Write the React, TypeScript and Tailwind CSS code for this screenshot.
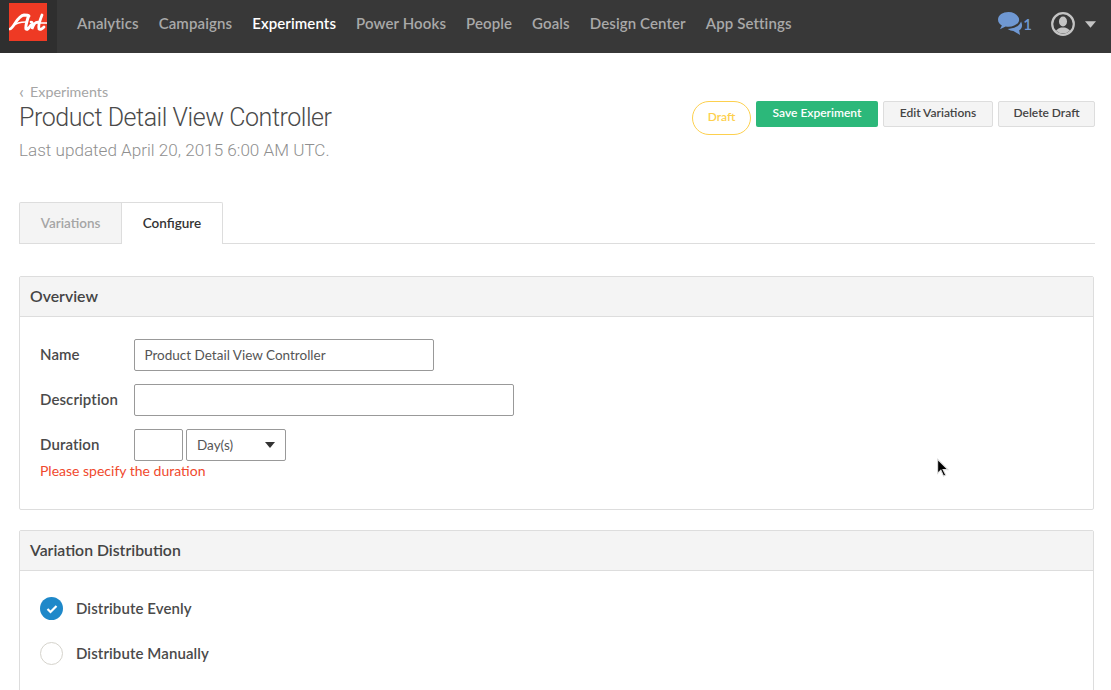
import React from 'react';

const font = { fontFamily: 'Lato, "Open Sans", sans-serif' };
const titleFont = { fontFamily: 'Roboto, sans-serif' };

const navItems = [
  { label: 'Analytics', active: false },
  { label: 'Campaigns', active: false },
  { label: 'Experiments', active: true },
  { label: 'Power Hooks', active: false },
  { label: 'People', active: false },
  { label: 'Goals', active: false },
  { label: 'Design Center', active: false },
  { label: 'App Settings', active: false },
];

const Caret = ({ className }: { className: string }) => (
  <svg viewBox="0 0 12 7" className={className}>
    <path d="M0 0h12L6 7z" fill="currentColor" />
  </svg>
);

const Panel = ({ title, children, className }: { title: string; children: React.ReactNode; className: string }) => (
  <section className={`border border-[#dddddd] rounded-[2px] ${className}`}>
    <h2 className="h-[40px] flex items-center pb-[2px] px-[10px] bg-[#f4f4f4] border-b border-[#dddddd] text-[15.800px] font-semibold text-[#444444]">{title}</h2>
    {children}
  </section>
);

const Row = ({ label, children }: { label: string; children: React.ReactNode }) => (
  <div className="flex items-center h-[32px]">
    <label className="w-[94px] pb-[2px] text-[15px] tracking-[0.1px] font-semibold text-[#4a4a4a]">{label}</label>
    {children}
  </div>
);

export default function App() {
  return (
    <div className="relative w-[1111px] h-[690px] overflow-hidden bg-white" style={font}>
      <nav className="h-[53px] bg-[#383838] flex items-center">
        <div className="w-[57px] h-full bg-[#2f2f2f] flex items-center pl-[9px] shrink-0 pb-[10px]">
          <div className="w-[38px] h-[38px] bg-[#ee3a24] overflow-hidden">
            <svg viewBox="0 0 38 38" className="w-[38px] h-[38px]">
              <g fill="none" stroke="white" strokeLinecap="round">
                <path d="M1 26C5 25 8 13 15 12c2 0 4 0 5 1" strokeWidth="2.800" />
                <path d="M4 23c3-3 8-4 13-4" strokeWidth="1.400" />
                <path d="M19.500 13c-1.500 5-3.500 11-2.500 13 1 1 3-1 5-4" strokeWidth="3" />
                <path d="M22 19c1.500 0 2 1 1 7 2-5 3-7 6-7" strokeWidth="2.600" />
                <path d="M33 12c-2 5-4 11-3 14 1 1 3 0 5-2" strokeWidth="2.800" />
                <path d="M27 20h11" strokeWidth="1.600" />
              </g>
            </svg>
          </div>
        </div>
        <div className="flex gap-[20px] ml-[20px] pb-[6px]">
          {navItems.map((item) => (
            <a key={item.label} className={`text-[15px] tracking-[0.11px] font-semibold ${item.active ? 'text-white' : 'text-[#a9a9a9]'}`}>{item.label}</a>
          ))}
        </div>
        <div className="ml-auto flex items-center mr-[15px] pb-[5px]">
          <svg viewBox="0 0 26 25" className="w-[25px] h-[24px] text-[#6f98d3]">
            <path d="M11 0C5 0 0 3 0 8c0 3 2 5 4 6l-2 4 6-3c1 0 2 .4 3 .4 6 0 11-3.400 11-7.400S17 0 11 0z" fill="currentColor" />
            <path d="M24 10c-1 4-6 7-12 7.500l-2 .2c2 1.300 4 2 6 2l7 4.300-1-5c2-1 3-3 3-5 0-1.500-.4-2.500-1-4z" fill="currentColor" />
          </svg>
          <span className="text-[15px] font-semibold text-[#6f98d3]">1</span>
          <svg viewBox="0 0 24 24" className="ml-[19px] w-[24px] h-[24px]">
            <defs>
              <clipPath id="avatar">
                <circle cx="12" cy="12" r="9.500" />
              </clipPath>
            </defs>
            <circle cx="12" cy="12" r="10.800" fill="#383838" stroke="#c4c4c4" strokeWidth="2.200" />
            <g clipPath="url(#avatar)" fill="#c4c4c4">
              <ellipse cx="12" cy="9.500" rx="4" ry="5" />
              <path d="M3 24c0-5 3-7 7-8.500h4c4 1.500 7 3.500 7 8.500z" />
            </g>
          </svg>
          <Caret className="ml-[10px] w-[11px] h-[7px] text-[#c4c4c4]" />
        </div>
      </nav>

      <main className="px-[19px] pr-[16px]">
        <div className="flex justify-between pt-[30px] h-[149px]">
          <div>
            <div className="flex items-center h-[18px] text-[14.300px] text-[#a5a5a5]">
              <span className="w-[11px] text-[18px] leading-[14px] pb-[3px]">‹</span>Experiments
            </div>
            <h1 className="mt-[1px] text-[25px] tracking-[-0.45px] font-light leading-[32px] text-[#4a4a4a]" style={titleFont}>Product Detail View Controller</h1>
            <p className="mt-[4px] text-[17.100px] font-light leading-[24px] text-[#8f8f8f]" style={titleFont}>Last updated April 20, 2015 6:00 AM UTC.</p>
          </div>
          <div className="flex items-start gap-[5px] pt-[18px]">
            <span className="w-[59px] h-[34px] pb-[2px] rounded-full border border-[#fdd04e] text-[#fdd04e] text-[12px] font-semibold flex items-center justify-center">Draft</span>
            <button className="w-[122px] h-[26px] pb-[2px] rounded-[2px] bg-[#2cb87a] text-white text-[12px] font-semibold">Save Experiment</button>
            <button className="w-[110px] h-[26px] pb-[2px] rounded-[2px] bg-[#f4f4f4] border border-[#dddddd] text-[#444444] text-[12px] font-semibold">Edit Variations</button>
            <button className="w-[97px] h-[26px] pb-[2px] rounded-[2px] bg-[#f4f4f4] border border-[#dddddd] text-[#444444] text-[12px] font-semibold">Delete Draft</button>
          </div>
        </div>

        <div className="flex h-[42px] border-b border-[#dddddd]">
          <div className="w-[103px] h-[41px] flex items-center justify-center bg-[#f4f4f4] border border-b-0 border-[#dddddd] rounded-tl-[2px] text-[13.500px] font-semibold text-[#a5a5a5]">Variations</div>
          <div className="w-[101px] h-[42px] pb-[1px] flex items-center justify-center bg-white border border-l-0 border-b-0 border-[#dddddd] rounded-tr-[2px] text-[13.500px] font-semibold text-[#333333]">Configure</div>
        </div>

        <Panel title="Overview" className="mt-[32px] h-[234px] mr-[1px]">
          <div className="pl-[20px] pt-[22px] flex flex-col gap-[13px]">
            <Row label="Name">
              <input readOnly value="Product Detail View Controller" className="w-[300px] h-[32px] pl-[9.500px] pr-[10px] border border-[#999999] rounded-[2px] text-[13.500px] text-[#555555] outline-none" />
            </Row>
            <Row label="Description">
              <input readOnly className="w-[380px] h-[32px] px-[10px] border border-[#999999] rounded-[2px] outline-none" />
            </Row>
            <div>
              <Row label="Duration">
                <input readOnly className="w-[49px] h-[32px] border border-[#999999] rounded-[2px] outline-none" />
                <div className="ml-[3px] w-[100px] h-[32px] pl-[10px] pr-[10px] flex items-center justify-between border border-[#999999] rounded-[2px] text-[13.500px] text-[#555555]">
                  Day(s)
                  <Caret className="w-[10px] h-[6px] text-[#333333]" />
                </div>
              </Row>
              <p className="mt-[1px] text-[14px] leading-[18px] text-[#f0492d]">Please specify the duration</p>
            </div>
          </div>
        </Panel>

        <Panel title="Variation Distribution" className="mt-[20px] h-[200px] mr-[1px]">
          <div className="pl-[20px] pt-[26px] flex flex-col gap-[22px]">
            <div className="flex items-center gap-[13px] h-[23px]">
              <span className="w-[23px] h-[23px] rounded-full bg-[#1e88c9] flex items-center justify-center">
                <svg viewBox="0 0 12 10" className="w-[12px] h-[10px]">
                  <path d="M1.500 5l3 3 6-6" fill="none" stroke="white" strokeWidth="2.200" />
                </svg>
              </span>
              <span className="text-[15px] tracking-[0.1px] font-semibold text-[#4a4a4a]">Distribute Evenly</span>
            </div>
            <div className="flex items-center gap-[13px] h-[23px]">
              <span className="w-[23px] h-[23px] rounded-full border border-[#d5d3cc] bg-white" />
              <span className="text-[15px] tracking-[0.1px] font-semibold text-[#4a4a4a]">Distribute Manually</span>
            </div>
          </div>
        </Panel>
      </main>

      <svg viewBox="0 0 12 18" className="absolute left-[936px] top-[458px] w-[13px] h-[20px]">
        <path d="M1.500 1v13l3-3 2.500 5.500 2-1L6.500 10.500H11z" fill="black" stroke="#dddddd" strokeWidth="1" />
      </svg>
    </div>
  );
}
